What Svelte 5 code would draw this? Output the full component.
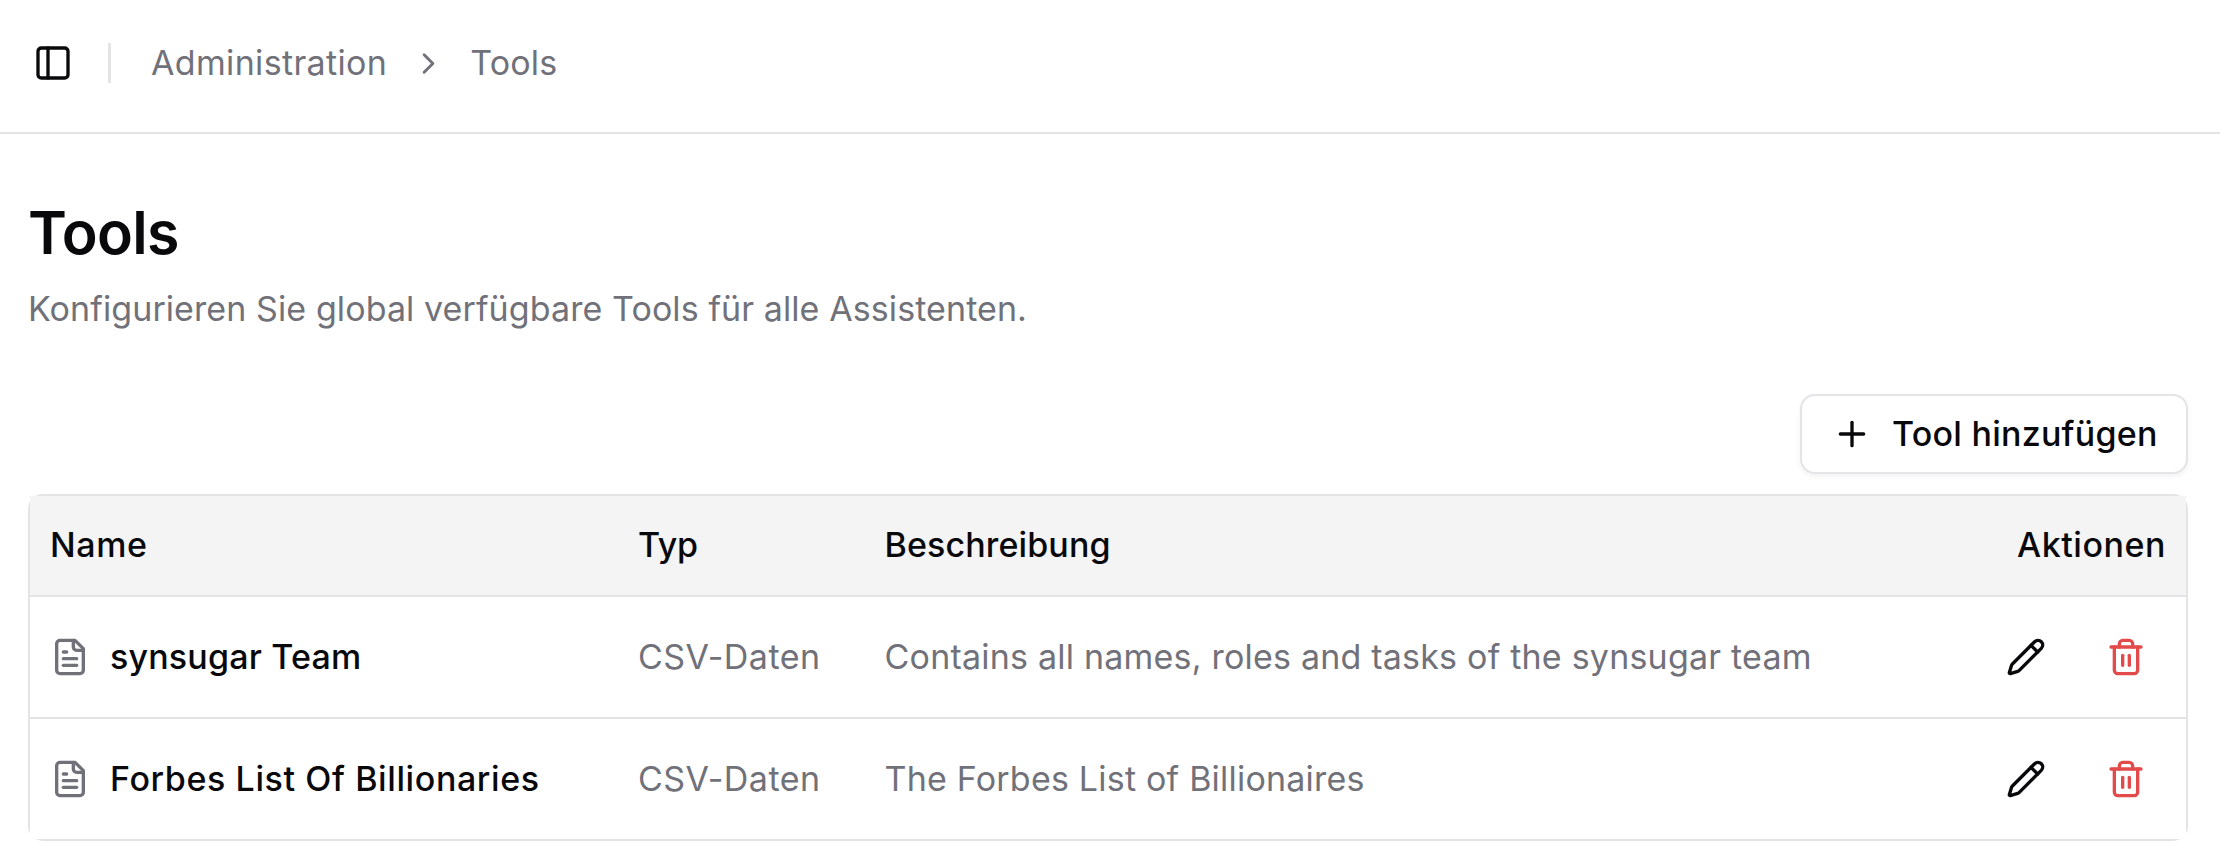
<script>
  const rows = [
    { name: 'synsugar Team', type: 'CSV-Daten', text: 'Contains all names, roles and tasks of the synsugar team' },
    { name: 'Forbes List Of Billionaries', type: 'CSV-Daten', text: 'The Forbes List of Billionaires', wide: true }
  ];
</script>

<header>
  <button class="trigger" aria-label="Sidebar">
    <svg viewBox="0 0 24 24"><rect width="18" height="18" x="3" y="3" rx="2" /><path d="M9 3v18" /></svg>
  </button>
  <span class="separator"></span>
  <nav>
    <span class="crumb">Administration</span>
    <svg class="chevron" viewBox="0 0 24 24"><path d="m9 18 6-6-6-6" /></svg>
    <span class="current">Tools</span>
  </nav>
</header>

<main>
  <h1>Tools</h1>
  <p class="lead">Konfigurieren Sie global verfügbare Tools für alle Assistenten.</p>

  <div class="toolbar">
    <button class="add">
      <svg viewBox="0 0 24 24"><path d="M5 12h14" /><path d="M12 5v14" /></svg>
      <span>Tool hinzufügen</span>
    </button>
  </div>

  <div class="table">
    <div class="row head">
      <div class="cell h-name">Name</div>
      <div class="cell h-type">Typ</div>
      <div class="cell h-text">Beschreibung</div>
      <div class="cell h-actions">Aktionen</div>
    </div>
    {#each rows as row}
      <div class="row body">
        <div class="cell name" class:wide={row.wide}>
          <svg class="file" viewBox="0 0 24 24">
            <path d="M15 2H6a2 2 0 0 0-2 2v16a2 2 0 0 0 2 2h12a2 2 0 0 0 2-2V7Z" />
            <path d="M14 2v4a2 2 0 0 0 2 2h4" />
            <path d="M10 9H8" /><path d="M16 13H8" /><path d="M16 17H8" />
          </svg>
          <span>{row.name}</span>
        </div>
        <div class="cell type">{row.type}</div>
        <div class="cell text">{row.text}</div>
        <div class="cell actions">
          <button aria-label="Bearbeiten">
            <svg viewBox="0 0 24 24">
              <path d="M21.174 6.812a1 1 0 0 0-3.986-3.987L3.842 16.174a2 2 0 0 0-.5.83l-1.321 4.352a.5.5 0 0 0 .623.622l4.353-1.32a2 2 0 0 0 .83-.497z" />
              <path d="m15 5 4 4" />
            </svg>
          </button>
          <button class="delete" aria-label="Löschen">
            <svg viewBox="0 0 24 24">
              <path d="M3 6h18" />
              <path d="M19 6v14c0 1-1 2-2 2H7c-1 0-2-1-2-2V6" />
              <path d="M8 6V4c0-1 1-2 2-2h4c1 0 2 1 2 2v2" />
              <path d="M10 11v6" /><path d="M14 11v6" />
            </svg>
          </button>
        </div>
      </div>
    {/each}
  </div>
</main>

<style>
  :global(body) {
    background: #fff;
    color: #09090b;
    font: 400 34px/50px Inter, sans-serif;
  }
  :global(*) { box-sizing: border-box; }
  svg {
    display: block;
    flex: none;
    width: 40px;
    height: 40px;
    fill: none;
    stroke: currentColor;
    stroke-width: 2;
    stroke-linecap: round;
    stroke-linejoin: round;
  }
  button {
    display: flex;
    align-items: center;
    justify-content: center;
    padding: 0;
    border: 0;
    background: none;
    color: inherit;
    font: inherit;
  }
  header {
    display: flex;
    align-items: center;
    height: 134px;
    padding: 0 18px 6px;
    border-bottom: 2px solid #e4e4e7;
  }
  .trigger { width: 70px; height: 70px; }
  .separator {
    width: 3px;
    height: 40px;
    margin: 0 40px 0 20px;
    background: #e4e4e7;
  }
  nav {
    display: flex;
    align-items: center;
    gap: 24px;
    color: #71717a;
  }
  .crumb { letter-spacing: 0.34px; }
  .current { letter-spacing: 0.17px; }
  .chevron { width: 35px; height: 35px; }
  main { padding: 69px 32px 0 28px; }
  h1 {
    margin: 0 0 21px;
    font-size: 59px;
    font-weight: 600;
    line-height: 60px;
    letter-spacing: -0.66px;
  }
  .lead {
    margin: 0 0 60px;
    color: #71717a;
    letter-spacing: 0.09px;
  }
  .toolbar {
    display: flex;
    justify-content: flex-end;
    margin-bottom: 20px;
  }
  .add {
    justify-content: flex-start;
    gap: 20px;
    width: 388px;
    height: 80px;
    padding-left: 30px;
    border: 2px solid #e4e4e7;
    border-radius: 15px;
    background: #fff;
    box-shadow: 0 2.5px 5px rgba(0, 0, 0, 0.05);
    font-weight: 500;
    letter-spacing: 0.24px;
    white-space: nowrap;
  }
  .table {
    border: 2px solid #e4e4e7;
    border-radius: 15px;
  }
  .row {
    display: grid;
    grid-template-columns: 588px 246.5px 1fr 240px;
    border-bottom: 2px solid #e4e4e7;
    background: #fff;
  }
  .row:last-child { border-bottom: 0; }
  .head {
    height: 101px;
    background: #f4f4f5;
    font-weight: 500;
  }
  .body { height: 122px; }
  .body:last-child { height: 120px; }
  .cell {
    display: flex;
    align-items: center;
    padding: 0 20px;
    white-space: nowrap;
  }
  .head .cell { padding-bottom: 2px; }
  .h-name { letter-spacing: 0.59px; }
  .h-type { letter-spacing: -0.3px; }
  .h-text { letter-spacing: 0.12px; }
  .h-actions { justify-content: flex-end; letter-spacing: 0.54px; }
  .name {
    gap: 20px;
    font-weight: 500;
    letter-spacing: 0.18px;
  }
  .name.wide { letter-spacing: 0.6px; }
  .file, .type, .text { color: #71717a; }
  .type { letter-spacing: 0.46px; }
  .text { letter-spacing: 0.21px; }
  .actions { justify-content: flex-end; gap: 20px; }
  .actions button { width: 80px; height: 80px; }
  .actions .delete { color: #e34b4b; }
</style>
